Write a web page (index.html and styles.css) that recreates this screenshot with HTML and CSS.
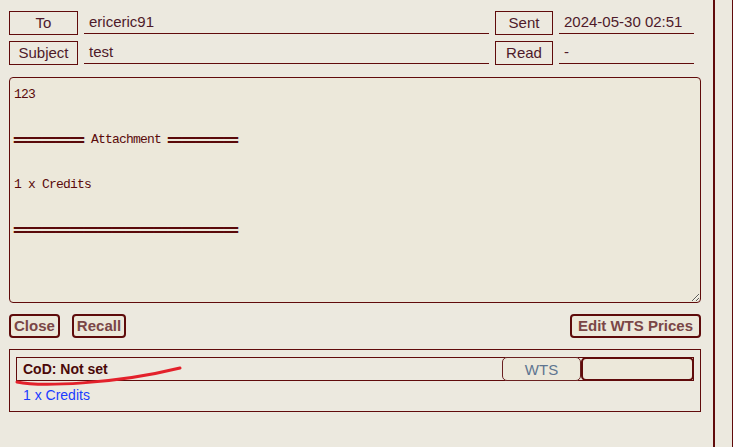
FILE: index.html
```html
<!DOCTYPE html>
<html lang="en">
<head>
    <meta charset="UTF-8">
    <title>Mail - test</title>
    <link rel="stylesheet" href="styles.css">
</head>
<body>
    <div class="window">
        <div class="mail">
            <div class="head">
                <div class="label">To</div>
                <div class="value">ericeric91</div>
                <div class="label">Sent</div>
                <div class="value">2024-05-30 02:51</div>
                <div class="label">Subject</div>
                <div class="value">test</div>
                <div class="label">Read</div>
                <div class="value">-</div>
            </div>

            <div class="body-text">123


<span class="rule">═════</span> Attachment <span class="rule">═════</span>


1 x Credits


<span class="rule">════════════════</span></div>

            <div class="actions">
                <button class="btn">Close</button>
                <button class="btn">Recall</button>
                <button class="btn right">Edit WTS Prices</button>
            </div>

            <div class="cod">
                <div class="cod-row">
                    <span class="cod-title">CoD: Not set</span>
                    <button class="wts">WTS</button>
                    <input class="price" type="text">
                </div>
                <a class="item" href="#">1 x Credits</a>
                <svg class="scribble" width="200" height="30" viewBox="0 0 200 30">
                    <path d="M2 20 C 25 25, 100 22, 165 6" fill="none" stroke="#e3212b" stroke-width="3" stroke-linecap="round"/>
                </svg>
            </div>
        </div>
        <div class="side"></div>
    </div>
</body>
</html>
```

FILE: styles.css
```css
body {
    margin: 0;
    background: #ece9df;
    font-family: "Liberation Sans", Arial, sans-serif;
    color: #4e1a2a;
}
.window {
    display: flex;
    height: 447px;
}
.mail {
    width: 713px;
    padding: 11px 12px 0 9px;
    box-sizing: border-box;
}
.side {
    width: 17px;
    border-left: 2px solid #600b0b;
    border-right: 1px solid #600b0b;
}
.head {
    display: grid;
    grid-template-columns: 69px 405px 58px 135px;
    column-gap: 6px;
    row-gap: 6px;
    font-size: 15px;
}
.label {
    border: 1px solid #600b0b;
    height: 22px;
    line-height: 22px;
    text-align: center;
}
.value {
    border-bottom: 1px solid #600b0b;
    height: 22px;
    line-height: 22px;
    padding-left: 5px;
}
.body-text {
    margin-top: 12px;
    height: 213px;
    padding: 9px 4px 2px;
    border: 1px solid #600b0b;
    border-radius: 4px;
    background: #ece8da;
    font-family: "Liberation Mono", monospace;
    font-size: 13px;
    letter-spacing: -0.8px;
    line-height: 15px;
    color: #5a0a0a;
    white-space: pre;
    overflow: auto;
    resize: vertical;
}
.rule {
    display: inline-block;
    vertical-align: top;
    font-family: "DejaVu Sans Mono", monospace;
    font-size: 23.25px;
    letter-spacing: 0;
    line-height: 15px;
}
.actions {
    display: flex;
    gap: 12px;
    margin-top: 11px;
}
.btn {
    font-family: "Liberation Sans", Arial, sans-serif;
    font-weight: bold;
    font-size: 15px;
    color: #7a4646;
    background: #ece8da;
    border: 2px solid #5e0b0b;
    border-radius: 4px;
    height: 24px;
    padding: 0 3px;
    line-height: 18px;
}
.btn.right {
    margin-left: auto;
    padding: 0 6px;
}
.cod {
    position: relative;
    margin-top: 11px;
    border: 1px solid #600b0b;
    padding: 7px 6px 8px 6px;
    height: 46px;
}
.cod-row {
    display: flex;
    align-items: center;
    border: 1px solid #600b0b;
    height: 22px;
    padding-left: 6px;
}
.cod-title {
    font-weight: bold;
    font-size: 14px;
    color: #4a0808;
    flex: 1;
}
.wts {
    width: 79px;
    height: 24px;
    margin: -1px 0;
    border: 1px solid #6a2020;
    border-radius: 5px;
    background: #ece8da;
    font-family: "Liberation Sans", Arial, sans-serif;
    font-size: 15px;
    color: #5e7590;
}
.price {
    box-sizing: border-box;
    width: 113px;
    height: 24px;
    margin: -1px -1px -1px 0;
    border: 2px solid #600b0b;
    border-radius: 5px;
    background: #ece8da;
    padding: 0 2px;
}
.item {
    display: block;
    margin: 6px 0 0 7px;
    font-size: 14px;
    color: #1a3cff;
    text-decoration: none;
}
.scribble {
    position: absolute;
    left: 5px;
    top: 12px;
}
```
